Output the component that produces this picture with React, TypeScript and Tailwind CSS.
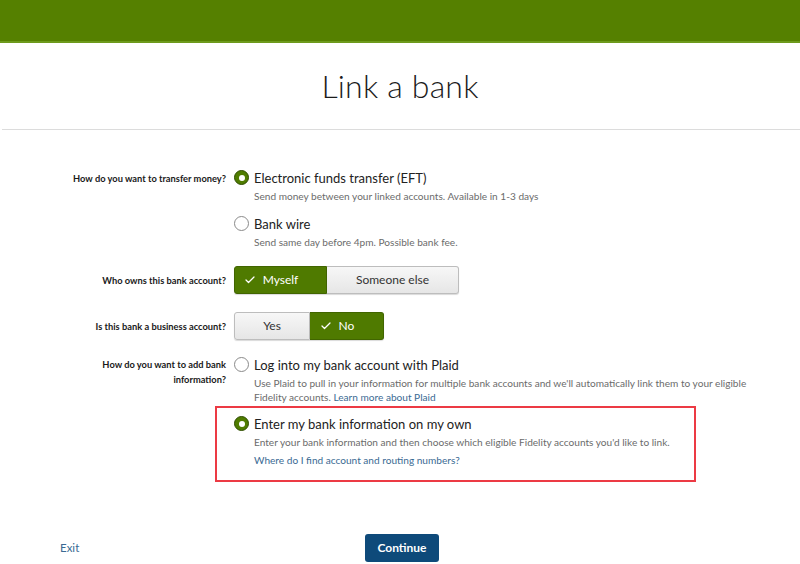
import { Check } from "lucide-react";

const font = { fontFamily: "Lato, 'Open Sans', sans-serif" };

const Radio = ({ checked }: { checked?: boolean }) => {
  if (checked) {
    return (
      <span className="mt-[1px] flex size-[15px] shrink-0 items-center justify-center rounded-full border border-[#2f4d00] bg-[#4f7c00]">
        <span className="size-[6px] rounded-full bg-white" />
      </span>
    );
  }
  return (
    <span className="mt-[1px] size-[15px] shrink-0 rounded-full border border-[#8a8a8a] bg-white" />
  );
};

const Option = ({
  title,
  checked,
  children,
}: {
  title: string;
  checked?: boolean;
  children?: React.ReactNode;
}) => (
  <div className="flex gap-[5px]">
    <Radio checked={checked} />
    <div className="flex flex-col">
      <div className="text-[13px] leading-[18px] text-[#222]">{title}</div>
      <div className="mt-[2px] text-[10.1px] leading-[14px] text-[#6b6b6b]">
        {children}
      </div>
    </div>
  </div>
);

const Segment = ({
  label,
  active,
  width,
  first,
}: {
  label: string;
  active?: boolean;
  width: string;
  first?: boolean;
}) => (
  <div
    className={
      (active
        ? "bg-[#4f7a00] text-white border-[#416500] "
        : "bg-gradient-to-b from-[#f7f7f7] to-[#e6e6e6] text-[#333] border-[#bdbdbd] ") +
      (first ? "rounded-l-[3px] " : "rounded-r-[3px] border-l-0 ") +
      "flex h-[28px] items-center justify-center border text-[12px] shadow-[0_1px_1px_rgba(0,0,0,0.15)] " +
      width
    }
  >
    <span className="relative">
      {active && (
        <Check
          className="absolute right-full top-[3px] mr-[7px] size-[12px]"
          strokeWidth={2.5}
        />
      )}
      {label}
    </span>
  </div>
);

const Label = ({ children }: { children: React.ReactNode }) => (
  <div className="text-right text-[9.3px] font-bold leading-[15px] text-[#1a1a1a]">
    {children}
  </div>
);

export default function App() {
  return (
    <div className="min-h-[564px] w-[800px] bg-white" style={font}>
      <div className="h-[43px] border-b-2 border-[#6d9a1c] bg-[#558000]" />
      <div className="flex h-[86px] items-center justify-center">
        <h1 className="text-[32px] font-light tracking-[0.2px] text-[#1b1b1b]">
          Link a bank
        </h1>
      </div>
      <div className="ml-[2px] h-[1px] bg-[#dcdcdc]" />

      <div className="mt-[39px] grid grid-cols-[226px_1fr] gap-x-[8px]">
        <div className="pt-[2px]">
          <Label>How do you want to transfer money?</Label>
        </div>
        <div className="flex flex-col gap-[12px]">
          <Option title="Electronic funds transfer (EFT)" checked>
            Send money between your linked accounts. Available in 1-3 days
          </Option>
          <Option title="Bank wire">
            Send same day before 4pm. Possible bank fee.
          </Option>
        </div>

        <div className="mt-[17px] flex items-center justify-end">
          <Label>Who owns this bank account?</Label>
        </div>
        <div className="mt-[17px] flex">
          <Segment label="Myself" active first width="w-[93px]" />
          <Segment label="Someone else" width="w-[132px]" />
        </div>

        <div className="mt-[18px] flex items-center justify-end">
          <Label>Is this bank a business account?</Label>
        </div>
        <div className="mt-[18px] flex">
          <Segment label="Yes" first width="w-[76px]" />
          <Segment label="No" active width="w-[74px]" />
        </div>

        <div className="mt-[16px] pt-[1px] pl-[95px]">
          <Label>How do you want to add bank information?</Label>
        </div>
        <div className="mt-[16px] flex flex-col">
          <div className="w-[525px]">
            <Option title="Log into my bank account with Plaid">
              Use Plaid to pull in your information for multiple bank accounts
              and we'll automatically link them to your eligible Fidelity
              accounts.{" "}
              <a className="text-[#3a6a93]">Learn more about Plaid</a>
            </Option>
          </div>
          <div className="mt-[2px] -ml-[19px] w-[481px] border-2 border-[#ec3a44] pb-[13px] pl-[17px] pt-[7px]">
            <Option title="Enter my bank information on my own" checked>
              Enter your bank information and then choose which eligible
              Fidelity accounts you'd like to link.
              <div className="mt-[4px] text-[#3a6a93]">
                Where do I find account and routing numbers?
              </div>
            </Option>
          </div>
        </div>
      </div>

      <div className="mt-[52px] grid grid-cols-[1fr_auto_1fr] items-center pl-[60px] pr-[56px]">
        <a className="text-[11.5px] text-[#3a6a93]">Exit</a>
        <button className="h-[28px] w-[74px] rounded-[3px] bg-[#0e4a7a] text-[12px] font-bold text-white">
          Continue
        </button>
        <div />
      </div>
    </div>
  );
}
